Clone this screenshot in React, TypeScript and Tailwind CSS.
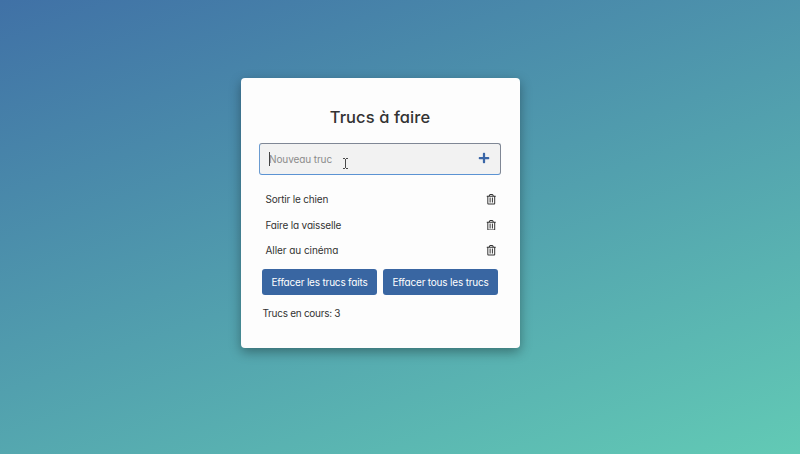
import { FaPlus, FaRegTrashAlt } from 'react-icons/fa';

const todos = [
  { text: 'Sortir le chien', tracking: 'tracking-[-0.19px]' },
  { text: 'Faire la vaisselle', tracking: 'tracking-[-0.17px]' },
  { text: 'Aller au cinéma', tracking: 'tracking-[-0.06px]' },
];

function TextCursor() {
  return (
    <svg
      className="absolute left-[81.5px] top-[13.5px]"
      width="7"
      height="11"
      viewBox="0 0 7 11"
      fill="none"
      stroke="#4a4a4a"
      strokeWidth="1"
    >
      <path d="M1 .5h2M4 .5h2M3.5 1v9M1 10.5h2M4 10.5h2" />
    </svg>
  );
}

export default function App() {
  return (
    <main className="h-[454px] w-[800px] overflow-hidden bg-[linear-gradient(160deg,#4071a6,#62cab5)] pl-[240.5px] pt-[78px] font-['Inter',sans-serif] text-[10px] text-[#333] [font-feature-settings:'cv11','ss03']">
      <section className="flex h-[270px] w-[279px] flex-col rounded-[4px] bg-[#fdfdfd] px-[18.5px] pt-[26px] shadow-[0_4px_12px_rgba(0,0,0,0.35)]">
        <h1 className="text-center text-[16.5px] font-medium leading-[26px] tracking-[0.08px]">
          Trucs à faire
        </h1>

        <form className="relative mt-[13px] flex h-[31.5px] items-center justify-between rounded-[3px] border border-t-[#7f8795] border-r-[#7f8795] border-b-[#5b93d3] border-l-[#6b9bd0] bg-[#f2f2f2] pl-[9px] pr-[10px]">
          <span className="absolute left-[9px] top-[8px] h-[14px] w-px bg-[#444]" />
          <span className="mt-[2px] tracking-[-0.1px] text-[#8b8b8b]">Nouveau truc</span>
          <TextCursor />
          <FaPlus className="mb-[2px] text-[#3a66a7]" size={12} />
        </form>

        <ul className="mt-[12.5px]">
          {todos.map((todo) => (
            <li key={todo.text} className="flex h-[25.5px] items-center justify-between pl-[6.5px] pr-[5px]">
              <span className={todo.tracking}>{todo.text}</span>
              <FaRegTrashAlt className="mb-px" size={10.5} />
            </li>
          ))}
        </ul>

        <div className="mt-[5px] flex gap-[6px] px-[3px] text-white">
          <button className="h-[26px] w-[115px] whitespace-nowrap rounded-[3px] bg-[#3966a2] pt-px tracking-[-0.19px]">
            Effacer les trucs faits
          </button>
          <button className="h-[26px] w-[115px] whitespace-nowrap rounded-[3px] bg-[#3966a2] pt-px tracking-[-0.19px]">
            Effacer tous les trucs
          </button>
        </div>

        <p className="mt-[11px] pl-[3.5px] leading-[15px] tracking-[-0.28px]">Trucs en cours: 3</p>
      </section>
    </main>
  );
}
